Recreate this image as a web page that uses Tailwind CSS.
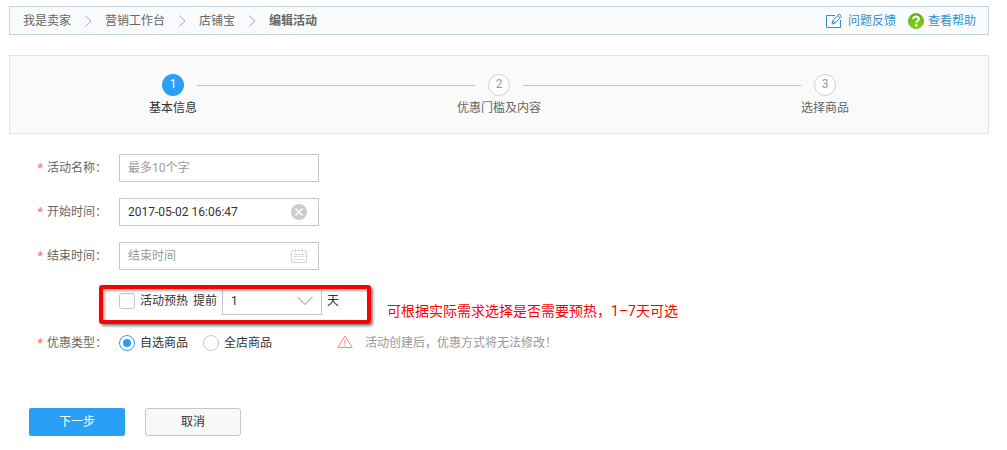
<!DOCTYPE html>
<html lang="zh-CN">
<head>
  <meta charset="UTF-8" />
  <meta name="viewport" content="width=device-width, initial-scale=1" />
  <title>编辑活动</title>
  <script src="https://cdn.jsdelivr.net/npm/@tailwindcss/browser@4"></script>
</head>
<body class="bg-white pt-[6px] pr-[18px] pl-[9px] font-[Roboto,'Noto_Sans_CJK_SC',sans-serif] text-[12px] leading-[18px] text-[#333]">

  <!-- 面包屑 -->
  <header class="flex h-[29px] items-center justify-between border border-[#c3d3dd] bg-[#f9fafc] pr-3 pl-[13px] text-[#666]">
    <nav class="flex items-center">
      <a href="#">我是卖家</a>
      <svg class="mx-[13px] h-3 w-2" viewBox="0 0 8 12" fill="none" stroke="#a9adbb"><path d="M1 .5 7 6 1 11.5" /></svg>
      <a href="#">营销工作台</a>
      <svg class="mx-[13px] h-3 w-2" viewBox="0 0 8 12" fill="none" stroke="#a9adbb"><path d="M1 .5 7 6 1 11.5" /></svg>
      <a href="#">店铺宝</a>
      <svg class="mx-[13px] h-3 w-2" viewBox="0 0 8 12" fill="none" stroke="#a9adbb"><path d="M1 .5 7 6 1 11.5" /></svg>
      <span class="font-bold">编辑活动</span>
    </nav>
    <div class="flex items-center gap-3 text-[#2e93d1]">
      <a href="#" class="flex items-center gap-[6px]">
        <svg class="h-4 w-4" viewBox="0 0 16 16" fill="none" stroke="currentColor">
          <path d="M9 2.500H.5v12h14V7" />
          <path d="M6 11l.8-3.200L13.200 1l2.300 2.200L9 10.200zM11.800 2.500l2.300 2.200M6.800 7.800 9 10.200" />
        </svg>
        问题反馈
      </a>
      <a href="#" class="flex items-center gap-1">
        <svg class="h-4 w-4" viewBox="0 0 16 16">
          <defs>
            <linearGradient id="green" x2="0" y2="1"><stop stop-color="#5cab10" /><stop offset="1" stop-color="#86dc10" /></linearGradient>
          </defs>
          <circle cx="8" cy="8" r="7.600" fill="url(#green)" stroke="#55a010" stroke-width=".6" />
          <path d="M5.200 6.200C5.200 2.600 10.800 2.700 10.800 6c0 2-2.600 2-2.600 4" fill="none" stroke="#fff" stroke-width="2" />
          <circle cx="8.200" cy="12.200" r="1.200" fill="#fff" />
        </svg>
        查看帮助
      </a>
    </div>
  </header>

  <!-- 步骤 -->
  <ol class="mt-5 grid h-[79px] grid-cols-3 border border-[#e4e4e6] bg-[#fafafa] pt-[18px] text-center text-[#666]">
    <li class="text-[#333]">
      <div class="flex items-center">
        <span class="flex-1"></span>
        <span class="mx-[13px] h-[22px] w-[22px] rounded-full bg-[#2a9ff6] leading-[21px] text-white">1</span>
        <span class="h-px flex-1 bg-[#bfc1cd]"></span>
      </div>
      <p class="mt-[3px]">基本信息</p>
    </li>
    <li>
      <div class="flex items-center">
        <span class="h-px flex-1 bg-[#bfc1cd]"></span>
        <span class="mx-[13px] h-[22px] w-[22px] rounded-full border border-[#cfd0da] bg-white leading-[19px] text-[#999]">2</span>
        <span class="h-px flex-1 bg-[#bfc1cd]"></span>
      </div>
      <p class="mt-[3px]">优惠门槛及内容</p>
    </li>
    <li>
      <div class="flex items-center">
        <span class="h-px flex-1 bg-[#bfc1cd]"></span>
        <span class="mx-[13px] h-[22px] w-[22px] rounded-full border border-[#cfd0da] bg-white leading-[19px] text-[#999]">3</span>
        <span class="flex-1"></span>
      </div>
      <p class="mt-[3px]">选择商品</p>
    </li>
  </ol>

  <form class="mt-5">
    <div class="flex flex-col gap-4">
      <div class="flex items-center gap-3">
        <label for="nombre" class="w-[98px] text-right text-[#666]"><span class="mr-1 font-bold text-[#ff7070]">*</span>活动名称：</label>
        <input id="nombre" type="text" placeholder="最多10个字" class="h-7 w-[200px] border border-[#c4c5d2] px-2 placeholder:text-[#999]">
      </div>

      <div class="flex items-center gap-3">
        <label for="inicio" class="w-[98px] text-right text-[#666]"><span class="mr-1 font-bold text-[#ff7070]">*</span>开始时间：</label>
        <div class="flex h-7 w-[200px] items-center border border-[#c4c5d2] pr-[11px] pl-2">
          <input id="inicio" type="text" value="2017-05-02 16:06:47" class="min-w-0 flex-1">
          <button type="button" aria-label="清除">
            <svg class="block h-4 w-4" viewBox="0 0 16 16"><circle cx="8" cy="8" r="8" fill="#ccc" /><path d="M4.500 4.500l7 7M11.500 4.500l-7 7" stroke="#fff" stroke-width="1.600" /></svg>
          </button>
        </div>
      </div>

      <div class="flex items-center gap-3">
        <label for="fin" class="w-[98px] text-right text-[#666]"><span class="mr-1 font-bold text-[#ff7070]">*</span>结束时间：</label>
        <div class="flex h-7 w-[200px] items-center border border-[#c4c5d2] pr-[11px] pl-2">
          <input id="fin" type="text" placeholder="结束时间" class="min-w-0 flex-1 placeholder:text-[#999]">
          <button type="button" aria-label="选择日期">
            <svg class="block h-4 w-4" viewBox="0 0 16 16" fill="none" stroke="#d2d2d2">
              <path d="M3 2.500H2Q.5 2.500.5 4v9Q.5 14.500 2 14.500h12q1.500 0 1.500-1.500V4q0-1.500-1.500-1.500h-1M6 2.500h4M4.500 1v3.500M11.500 1v3.500" />
              <path d="M3 6.500h3M7 6.500h2.500M10.500 6.500h3M3 8.500h3M7 8.500h2.500M10.500 8.500h3M3 11.500h3M7 11.500h2.500M10.500 11.500h3" />
            </svg>
          </button>
        </div>
      </div>
    </div>

    <!-- 预热 -->
    <div class="mt-[11px] flex items-center">
      <div class="relative ml-[110px] flex items-center">
        <label class="flex items-center gap-[5px]">
          <input type="checkbox" class="h-4 w-4 appearance-none rounded-[3px] border border-[#c4c5d2] bg-white checked:bg-[#2a9ff6]">
          活动预热
        </label>
        <label for="dias" class="ml-[5px]">提前</label>
        <div class="mx-[5px] grid h-7 w-[100px] items-center border border-[#c4c5d2]">
          <select id="dias" class="col-start-1 row-start-1 h-full w-full appearance-none px-2">
            <option>1</option><option>2</option><option>3</option><option>4</option><option>5</option><option>6</option><option>7</option>
          </select>
          <svg class="pointer-events-none col-start-1 row-start-1 mr-2 h-[10px] w-4 justify-self-end" viewBox="0 0 16 10" fill="none" stroke="#b4b6c2" stroke-width="1.200"><path d="M.5 1 8 8.500 15.500 1" /></svg>
        </div>
        <span>天</span>
        <div class="pointer-events-none absolute -top-[2px] -right-8 -bottom-[9px] -left-5 rounded-[3px] border-4 border-[#f00] shadow-[2px_2px_3px_rgba(0,0,0,0.5),inset_2px_2px_3px_rgba(0,0,0,0.3)]"></div>
      </div>
      <p class="mt-5 ml-12 text-[14px] leading-5 text-[#f00]">可根据实际需求选择是否需要预热，1–7天可选</p>
    </div>

    <div class="mt-[13px] flex items-center">
      <span class="mr-3 w-[98px] text-right text-[#666]"><span class="mr-1 font-bold text-[#ff7070]">*</span>优惠类型：</span>
      <label class="flex items-center gap-[5px]">
        <input type="radio" name="tipo" checked class="h-4 w-4 appearance-none rounded-full border border-[#c4c5d2] bg-white bg-clip-content p-[3px] checked:border-[#2a9ff6] checked:bg-[#2a9ff6]">
        自选商品
      </label>
      <label class="ml-[15px] flex items-center gap-[5px]">
        <input type="radio" name="tipo" class="h-4 w-4 appearance-none rounded-full border border-[#c4c5d2] bg-white bg-clip-content p-[3px] checked:border-[#2a9ff6] checked:bg-[#2a9ff6]">
        全店商品
      </label>
      <p class="ml-[65px] flex items-center gap-3 text-[#999]">
        <svg class="h-4 w-4" viewBox="0 0 16 16" fill="none" stroke="#ff8a65"><path d="M8 1 .8 12.500h14.400zM8 4.500v5M8 10.200v1.200" stroke-linejoin="round" /></svg>
        活动创建后，优惠方式将无法修改！
      </p>
    </div>

    <div class="mt-14 ml-5 flex gap-5">
      <button type="submit" class="h-7 w-24 rounded-[2px] bg-[#2a9ff6] text-white">下一步</button>
      <button type="button" class="h-7 w-24 rounded-[3px] border border-[#c4c5d2] bg-[#f7f8fa]">取消</button>
    </div>
  </form>
</body>
</html>
